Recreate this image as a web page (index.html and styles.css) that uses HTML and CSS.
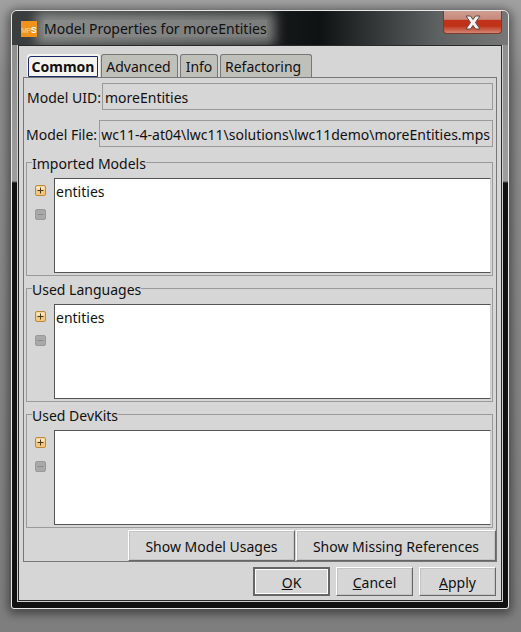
FILE: index.html
```html
<!DOCTYPE html>
<html lang="en">
<head>
  <meta charset="UTF-8" />
  <title>Model Properties for moreEntities</title>
  <link rel="stylesheet" href="styles.css">
</head>
<body>
  <div class="window">
    <div class="titlebar">
      <div class="mps-icon"><span class="mps-m">MP</span><span class="mps-s">S</span></div>
      <div class="title">Model Properties for moreEntities</div>
      <div class="close">
        <svg width="16" height="15" viewBox="0 0 16 15"><path d="M1 1h4.500L8 4.500 10.500 1H15l-4.500 6.500L15 14h-4.500L8 10.500 5.500 14H1l4.500-6.500z" fill="#f2f2f2" stroke="#5a4a48" stroke-width="1"/></svg>
      </div>
    </div>
    <div class="client">
      <div class="tabs">
        <div class="tab tab-active"><span class="tab-focus">Common</span></div>
        <div class="tab tab-advanced">Advanced</div>
        <div class="tab tab-info">Info</div>
        <div class="tab tab-refactoring">Refactoring</div>
      </div>
      <div class="pane">
        <div class="row row-uid">
          <div class="row-label">Model UID:</div>
          <div class="field">moreEntities</div>
        </div>
        <div class="row row-file">
          <div class="row-label">Model File:</div>
          <div class="field field-right">wc11-4-at04\lwc11\solutions\lwc11demo\moreEntities.mps</div>
        </div>

        <div class="group">
          <div class="legend">Imported Models</div>
          <div class="side">
            <svg class="icon-plus" width="11" height="11" viewBox="0 0 11 11"><rect x="0.500" y="0.500" width="10" height="10" rx="1.500" fill="#f6c67c" stroke="#b98a3e"/><rect x="1.500" y="1.500" width="8" height="3" fill="#fbe6bf"/><path d="M5.500 2.500v6M2.500 5.500h6" stroke="#4a3a20"/></svg>
            <svg class="icon-minus" width="11" height="11" viewBox="0 0 11 11"><rect x="0.500" y="0.500" width="10" height="10" rx="1.500" fill="#a9a9a9" stroke="#999"/><path d="M2.500 5.500h6" stroke="#8a8a8a"/></svg>
          </div>
          <div class="list">entities</div>
        </div>
        <div class="group">
          <div class="legend">Used Languages</div>
          <div class="side">
            <svg class="icon-plus" width="11" height="11" viewBox="0 0 11 11"><rect x="0.500" y="0.500" width="10" height="10" rx="1.500" fill="#f6c67c" stroke="#b98a3e"/><rect x="1.500" y="1.500" width="8" height="3" fill="#fbe6bf"/><path d="M5.500 2.500v6M2.500 5.500h6" stroke="#4a3a20"/></svg>
            <svg class="icon-minus" width="11" height="11" viewBox="0 0 11 11"><rect x="0.500" y="0.500" width="10" height="10" rx="1.500" fill="#a9a9a9" stroke="#999"/><path d="M2.500 5.500h6" stroke="#8a8a8a"/></svg>
          </div>
          <div class="list">entities</div>
        </div>
        <div class="group">
          <div class="legend">Used DevKits</div>
          <div class="side">
            <svg class="icon-plus" width="11" height="11" viewBox="0 0 11 11"><rect x="0.500" y="0.500" width="10" height="10" rx="1.500" fill="#f6c67c" stroke="#b98a3e"/><rect x="1.500" y="1.500" width="8" height="3" fill="#fbe6bf"/><path d="M5.500 2.500v6M2.500 5.500h6" stroke="#4a3a20"/></svg>
            <svg class="icon-minus" width="11" height="11" viewBox="0 0 11 11"><rect x="0.500" y="0.500" width="10" height="10" rx="1.500" fill="#a9a9a9" stroke="#999"/><path d="M2.500 5.500h6" stroke="#8a8a8a"/></svg>
          </div>
          <div class="list"></div>
        </div>

        <div class="pane-buttons">
          <button class="btn btn-usages">Show Model Usages</button>
          <button class="btn btn-missing">Show Missing References</button>
        </div>
      </div>
      <div class="dialog-buttons">
        <button class="btn btn-dialog btn-ok"><u>O</u>K</button>
        <button class="btn btn-dialog"><u>C</u>ancel</button>
        <button class="btn btn-dialog"><u>A</u>pply</button>
      </div>
    </div>
  </div>
</body>
</html>
```

FILE: styles.css
```css
* { margin: 0; padding: 0; box-sizing: border-box; }
html, body { height: 632px; overflow: hidden; }
body {
  background: linear-gradient(#a0a0a0, #8c8c8c 12%, #7e7e7e);
  font-family: "Noto Sans", Tahoma, sans-serif;
  font-size: 14px;
  color: #111;
  padding: 10px 12px 0 11px;
}
.window {
  width: 498px;
  height: 599px;
  border: 1px solid #e8e8e8;
  border-radius: 6px 6px 3px 3px;
  background: linear-gradient(#8c8c8c, #9e9e9e 170px, #111 172px, #111);
  box-shadow: 0 2px 10px 3px rgba(0, 0, 0, 0.45);
  padding: 0 6px 7px 6px;
  display: flex;
  flex-direction: column;
  overflow: hidden;
}
.titlebar {
  height: 34px;
  flex: none;
  margin: 0 -6px;
  padding: 0 6px;
  display: flex;
  align-items: center;
  position: relative;
  overflow: hidden;
  background: linear-gradient(90deg, #3c3f3f, #1c1f1f 45%, #0f1212 62%, #5f6262 86%, #777);
}
.mps-icon {
  width: 16px;
  height: 16px;
  margin: 1px 0 0 3px;
  background: #ef931c;
  font-family: "Liberation Sans", sans-serif;
  line-height: 19px;
  display: flex;
  justify-content: center;
  letter-spacing: -0.6px;
  position: relative;
  z-index: 1;
}
.mps-m { color: #fbd6a4; font-size: 7px; }
.mps-s { color: #fff; font-size: 9px; font-weight: bold; letter-spacing: 0; }
.title {
  margin-left: 7px;
  padding: 1px 0 0 0;
  color: #111;
  line-height: 16px;
  background: rgba(190, 190, 190, 0.6);
  box-shadow: 0 0 12px 8px rgba(190, 190, 190, 0.6);
}
.close {
  position: absolute;
  top: 0;
  right: 6px;
  width: 59px;
  height: 23px;
  border: 1px solid #7c3a30;
  border-top: 0;
  border-radius: 0 0 4px 4px;
  background: linear-gradient(#cf9d92, #c68a7c 38%, #c0321a 42%, #bf3218 68%, #d48672);
  display: flex;
  align-items: center;
  justify-content: center;
}
.client {
  flex: 1;
  background: #d6d6d6;
  border: 1px solid #2a2a2a;
  outline: 1px solid #cfcfcf;
  padding: 8px 4px 0 4px;
}
.tabs {
  display: flex;
  height: 23px;
  padding-left: 4px;
}
.tab {
  height: 23px;
  background: #c0c0bb;
  border: 1px solid #777;
  border-bottom: 0;
  border-radius: 3px 3px 0 0;
  text-align: center;
  line-height: 24px;
}
.tab-active {
  width: 73px;
  background: #f5f3ee;
  font-weight: bold;
  padding: 1px 1px 0 0;
  border-color: #f5f3ee;
  margin-right: 1px;
}
.tab-focus {
  display: block;
  height: 21px;
  line-height: 20px;
  border: 1px solid #1a2a6a;
  border-radius: 3px 0 0 0;
}
.tab-advanced { width: 77px; padding-right: 2px; }
.tab-info { width: 38px; margin-left: 2px; }
.tab-refactoring { width: 92px; margin-left: 2px; text-align: left; padding-left: 4px; }
.pane {
  border: 1px solid #777;
  height: 485px;
  width: 474px;
  padding: 5px 3px 0 2px;
}
.row { display: flex; height: 27px; }
.row-uid { padding-left: 1px; }
.row-file { margin-top: 10px; }
.row-label { white-space: nowrap; flex: none; line-height: 29px; }
.row-uid .row-label { width: 75px; }
.row-file .row-label { width: 73px; }
.field {
  flex: 1;
  border: 1px solid #9a9a9a;
  line-height: 28px;
  padding-left: 2px;
  white-space: nowrap;
}
.field-right {
  padding: 0 2px 0 0;
  text-align: right;
}
.group {
  border: 1px solid #9a9a9a;
  height: 114px;
  margin-top: 12px;
  padding-top: 15px;
  display: flex;
  position: relative;
}
.row-file + .group { margin-top: 15px; }
.legend {
  position: absolute;
  top: -7px;
  left: 5px;
  line-height: 16px;
  background: #d6d6d6;
}
.side {
  width: 27px;
  flex: none;
  padding: 7px 0 0 8px;
}
.side svg { display: block; }
.icon-minus { margin-top: 13px; }
.list {
  flex: 1;
  height: 95px;
  margin-right: 1px;
  background: #fff;
  border: 1px solid #555;
  border-right-color: #ccc;
  padding-left: 1px;
  line-height: 25px;
}
.pane-buttons {
  display: flex;
  justify-content: flex-end;
  gap: 1px;
  margin: 2px -3px 0 0;
}
.btn {
  font: inherit;
  color: inherit;
  background: #d6d6d6;
  border: 1px solid;
  border-color: #fff #666 #666 #fff;
  outline: 1px solid #c4c4c4;
  outline-offset: -2px;
  text-align: center;
  padding-top: 2px;
}
.btn-usages { width: 167px; height: 31px; }
.btn-missing { width: 200px; height: 31px; }
.dialog-buttons {
  display: flex;
  justify-content: flex-end;
  gap: 6px;
  margin: 5px 1px 0 0;
}
.btn-dialog { width: 77px; height: 29px; }
.btn-ok { border: 2px solid #666; outline: 1px solid #fff; outline-offset: -3px; }
```
